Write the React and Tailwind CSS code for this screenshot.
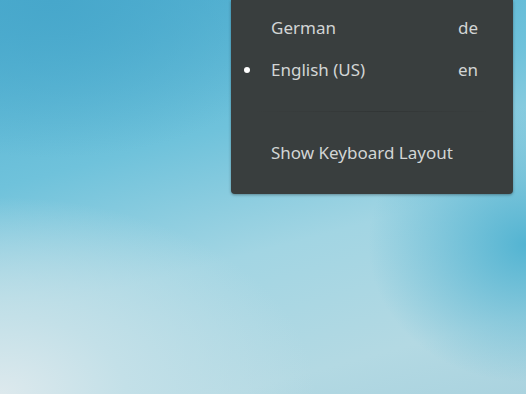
export default function App() {
  const items = [
    { label: "German", code: "de", active: false },
    { label: "English (US)", code: "en", active: true },
  ];

  return (
    <div className="relative w-[526px] h-[394px] overflow-hidden bg-[radial-gradient(ellipse_60%_50%_at_0%_100%,#dde9ed_0%,#c3e0e8_40%,transparent_100%),radial-gradient(ellipse_30%_35%_at_100%_62%,#53b4d2_0%,transparent_100%),radial-gradient(ellipse_50%_40%_at_10%_0%,#47a7cb_0%,transparent_100%),linear-gradient(165deg,#4eaed0_0%,#6fc2db_35%,#a2d5e3_60%,#b3d9e3_85%,#aad3df_100%)] font-['Noto_Sans','Open_Sans',sans-serif]">
      {/* Keyboard layout popup menu */}
      <div className="absolute left-[231px] top-0 w-[282px] h-[194px] bg-[#393e3e] rounded-b-[4px] shadow-[0_1px_3px_rgba(0,0,0,0.35)] flex flex-col pt-[7px] text-[#d2d5d5] text-[17px]">
        {items.map((it) => (
          <div key={it.code} className="h-[42px] flex items-center">
            <div className="w-[40px] flex justify-center pr-[8px]">
              {it.active && <span className="w-[6px] h-[6px] rounded-full bg-white" />}
            </div>
            <span className="flex-1">{it.label}</span>
            <span className="pr-[35px]">{it.code}</span>
          </div>
        ))}
        <div className="h-[41px] flex items-center px-[20px]">
          <div className="h-px w-full bg-[linear-gradient(90deg,transparent,#363a3a_30%,#313535_55%,#363a3a_75%,transparent)]" />
        </div>
        <div className="h-[42px] flex items-center pl-[40px]">Show Keyboard Layout</div>
      </div>
    </div>
  );
}
